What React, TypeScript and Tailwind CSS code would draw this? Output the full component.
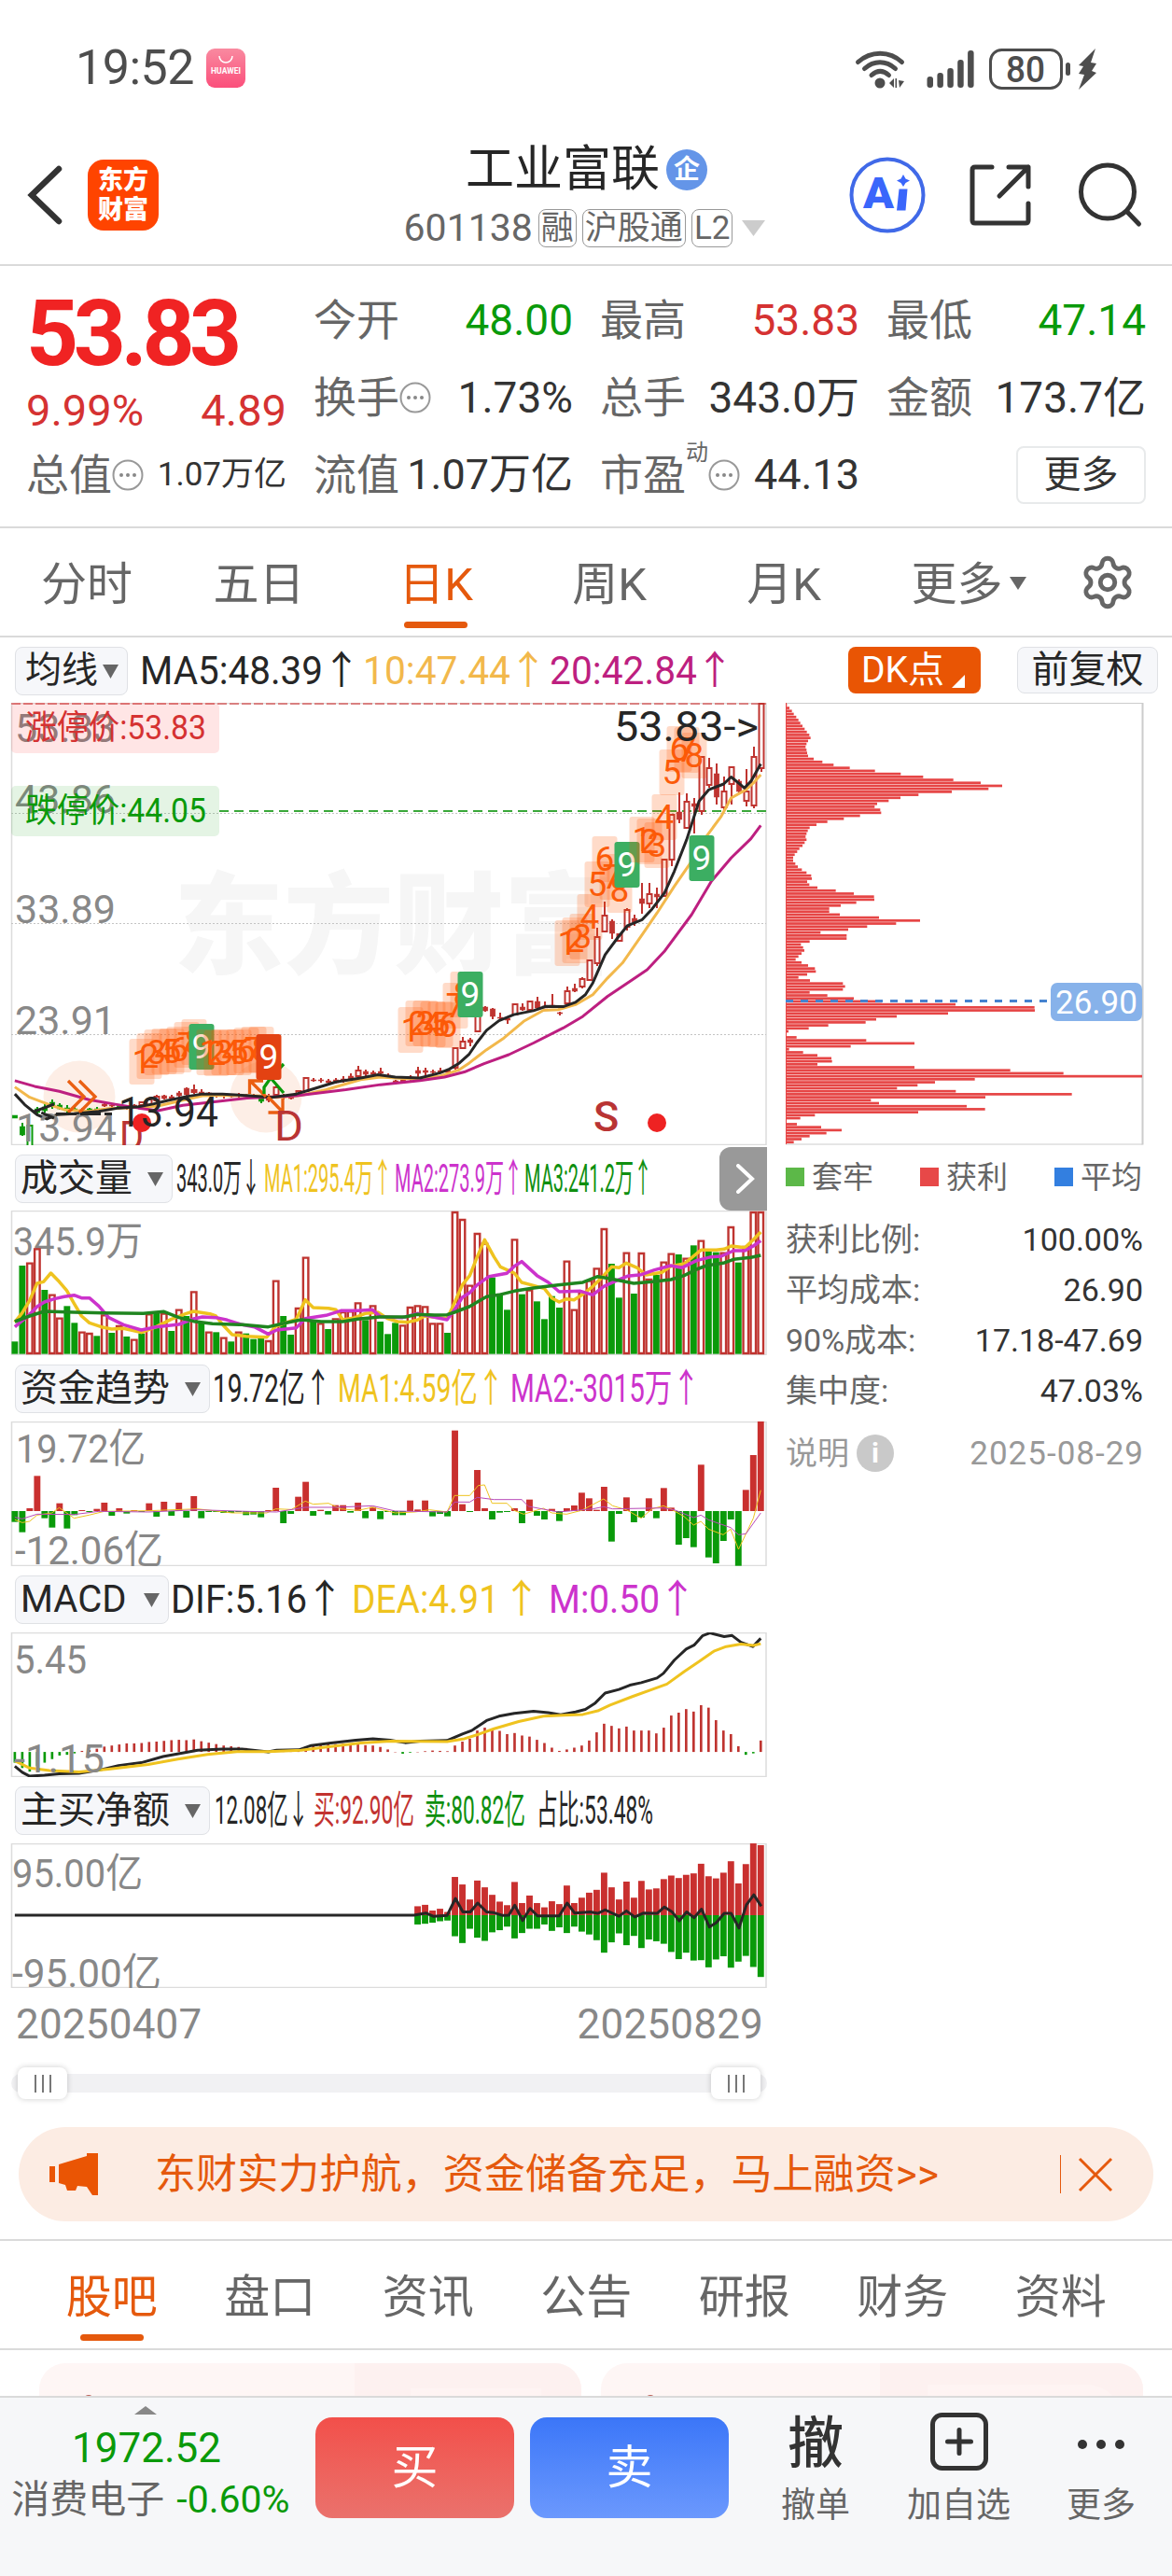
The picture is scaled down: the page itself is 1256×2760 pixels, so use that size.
import React from 'react';
import { Settings } from 'lucide-react';

type Point = [number, number];

const UP = '#bf3430';
const DOWN = '#0a9a0a';
const GOLD = '#efc31f';
const STEP = 8;
const candleX = (i: number) => 16 + STEP * i;

/* ---------- series ---------- */
// indicator series live on a 1568 unit wide grid, one bar every 15.1 units
const GRID_X = 0.5294;
const gridX = (i: number) => 30 + 15.1 * i;

const volumeTops = [
  652, 408, 398, 352, 486, 500, 575, 538, 592, 620, 624, 634, 565, 624, 600, 636, 644, 626, 562, 556,
  560, 618, 548, 570, 490, 592, 620, 622, 638, 652, 620, 626, 644, 640, 648, 455, 570, 630, 543, 380,
  585, 592, 612, 577, 555, 553, 526, 583, 535, 588, 628, 592, 598, 540, 535, 538, 592, 592, 624, 234,
  258, 470, 303, 335, 446, 500, 550, 322, 500, 485, 523, 580, 506, 543, 392, 548, 490, 455, 415, 288,
  402, 511, 365, 498, 366, 450, 438, 395, 368, 372, 383, 343, 326, 355, 365, 365, 282, 398, 345, 234, 234,
];
const volumeDown = new Set([
  0, 1, 4, 7, 8, 11, 13, 15, 17, 19, 21, 23, 25, 27, 29, 31, 32, 33, 36, 37, 40, 42, 47, 49, 50, 51, 58,
  64, 65, 66, 68, 70, 71, 72, 73, 80, 81, 83, 86, 89, 91, 93, 94, 97,
]);
const fundEnds = [
  1232, 1265, 1188, 1084, 1220, 1250, 1172, 1253, 1210, 1194, 1200, 1190, 1170, 1212, 1188, 1205, 1194,
  1200, 1172, 1215, 1167, 1212, 1170, 1218, 1149, 1220, 1200, 1200, 1203, 1203, 1200, 1210, 1208, 1217,
  1194, 1122, 1236, 1206, 1151, 1103, 1212, 1193, 1208, 1178, 1178, 1202, 1170, 1220, 1184, 1223, 1200,
  1210, 1210, 1163, 1192, 1163, 1214, 1206, 1214, 938, 1175, 1200, 1065, 1188, 1224, 1202, 1200, 1188,
  1236, 1160, 1212, 1224, 1190, 1229, 1188, 1179, 1138, 1156, 1193, 1119, 1295, 1206, 1153, 1233, 1218,
  1156, 1220, 1123, 1186, 1305, 1284, 1313, 1048, 1346, 1365, 1293, 1224, 1373, 1129, 1017, 908,
];
const macdEnds = [
  545, 560, 570, 555, 545, 535, 525, 523, 519, 512, 510, 506, 500, 497, 494, 491, 491, 490, 487, 486, 484,
  482, 481, 482, 480, 485, 489, 493, 497, 499, 501, 504, 507, 510, 518, 512, 511, 509, 507, 500, 497, 495,
  494, 493, 492, 492, 493, 496, 497, 501, 508, 515, 520, 517, 515, 513, 511, 512, 513, 497, 486, 478, 455,
  447, 450, 456, 465, 462, 469, 472, 481, 490, 503, 512, 508, 503, 497, 483, 460, 436, 442, 449, 444, 455,
  455, 455, 463, 447, 413, 405, 395, 402, 384, 391, 426, 455, 465, 499, 523, 519, 483,
];
// first bar of this series sits at index 54
const netBars: Point[] = [
  [947, 998], [943, 996], [959, 993], [954, 989], [963, 987], [865, 1031], [886, 1050], [928, 1010],
  [875, 1035], [894, 1044], [915, 1020], [934, 1014], [944, 1004], [879, 1037], [938, 1022], [917, 1010],
  [938, 1010], [950, 998], [933, 1016], [941, 1006], [889, 1022], [938, 1004], [923, 1018], [909, 1026],
  [901, 1042], [853, 1077], [894, 1048], [928, 1023], [878, 1056], [923, 1030], [876, 1064], [900, 1040],
  [897, 1045], [871, 1052], [861, 1075], [868, 1095], [859, 1077], [855, 1099], [828, 1098], [863, 1118],
  [869, 1096], [853, 1087], [821, 1119], [883, 1102], [829, 1086], [771, 1117], [776, 1145],
];
const chips = [
  70, 78, 86, 92, 100, 107, 113, 120, 127, 134, 142, 146, 138, 133, 130, 133, 135, 138, 156, 184, 220, 272,
  353, 436, 508, 605, 693, 762, 718, 600, 493, 435, 397, 360, 352, 370, 373, 305, 253, 200, 165, 143, 137,
  133, 130, 133, 127, 120, 110, 103, 95, 90, 90, 97, 105, 118, 133, 148, 150, 135, 142, 168, 227, 285, 350,
  351, 293, 243, 206, 206, 240, 366, 498, 421, 328, 267, 178, 262, 262, 143, 115, 122, 126, 117, 107, 98,
  117, 138, 160, 163, 135, 107, 144, 250, 257, 250, 143, 200, 285, 375, 612, 866, 867, 588, 423, 357, 323,
  203, 140, 75, 66, 101, 325, 480, 275, 77, 122, 168, 213, 215, 168, 480, 788, 959, 1212, 674, 546, 490,
  424, 613, 986, 708, 340, 366, 648, 707, 492, 160, 113, 66, 102, 180, 246, 197, 143, 117, 92,
];

const lines = {
  ma5: '30,1378 50,1410 75,1440 95,1453 115,1440 150,1437 200,1430 240,1420 280,1416 310,1408 340,1397 380,1385 410,1378 450,1378 490,1382 550,1388 600,1378 640,1360 680,1342 730,1330 765,1320 800,1327 850,1330 890,1315 910,1303 930,1285 950,1258 965,1225 985,1187 1010,1158 1040,1140 1080,1128 1105,1115 1140,1116 1165,1103 1185,1080 1200,1045 1225,960 1250,910 1270,873 1300,855 1320,823 1345,775 1365,710 1390,615 1415,500 1435,465 1465,448 1480,427 1495,445 1507,460 1520,440 1540,388',
  ma10: '30,1357 60,1388 100,1410 130,1425 180,1430 220,1422 280,1418 320,1414 360,1400 410,1383 460,1382 530,1384 560,1388 610,1382 660,1365 730,1335 770,1327 830,1333 890,1325 930,1305 950,1285 985,1245 1020,1210 1060,1160 1100,1127 1130,1125 1165,1110 1200,1080 1230,1030 1260,985 1300,900 1330,835 1365,755 1400,680 1430,605 1460,545 1480,490 1510,465 1525,445 1540,420',
  ma20: '30,1338 70,1355 120,1370 180,1395 230,1408 280,1420 320,1428 370,1412 430,1402 500,1390 600,1383 700,1365 770,1350 850,1338 900,1327 940,1312 980,1287 1030,1260 1080,1225 1140,1180 1180,1145 1230,1085 1280,1035 1310,1005 1345,950 1400,840 1440,740 1480,670 1520,612 1540,572',
  vol1: '30,590 45,560 60,520 75,465 88,460 103,432 120,460 135,488 150,530 165,570 181,592 205,605 226,612 250,610 286,623 316,605 347,580 377,562 392,555 425,563 437,570 452,600 470,630 498,635 540,638 558,603 600,580 618,518 634,543 665,545 680,550 694,582 715,577 739,562 765,558 784,578 805,588 825,590 845,583 860,570 905,578 915,545 936,470 951,440 966,380 981,325 1000,380 1013,412 1041,432 1056,462 1075,470 1102,482 1117,512 1132,525 1147,515 1162,518 1180,500 1200,475 1222,440 1238,412 1253,415 1268,400 1290,415 1308,438 1340,430 1358,410 1385,402 1419,358 1450,358 1466,355 1480,345 1508,350 1525,325 1540,300',
  vol2: '30,605 60,565 75,540 90,525 110,515 130,508 150,503 165,512 181,512 200,538 220,575 250,598 286,615 316,605 362,597 390,580 410,573 437,575 460,583 490,598 515,605 543,628 560,615 600,608 618,578 660,568 690,553 724,553 754,550 770,572 815,575 845,562 875,572 905,582 920,550 936,510 951,495 966,470 990,443 1026,433 1041,410 1056,395 1087,440 1110,462 1132,492 1175,490 1200,502 1222,475 1250,455 1270,442 1298,437 1325,422 1358,408 1380,415 1410,392 1440,380 1460,378 1485,360 1508,360 1525,345 1540,328',
  vol3: '30,588 60,570 90,555 150,558 210,560 290,562 332,556 362,575 392,587 430,595 490,598 543,605 580,592 610,582 650,588 694,588 724,580 770,573 820,573 845,565 880,567 905,566 920,558 950,540 985,508 1010,502 1041,490 1080,480 1130,470 1180,462 1210,443 1235,450 1283,465 1320,460 1358,453 1385,440 1410,420 1430,408 1464,400 1485,388 1520,382 1540,375',
  fund1: '30,1225 45,1234 60,1230 75,1210 105,1203 120,1186 150,1220 180,1210 211,1198 300,1196 400,1190 470,1203 540,1203 558,1190 590,1192 618,1165 634,1175 665,1172 690,1190 724,1195 754,1185 800,1203 840,1200 870,1193 905,1200 920,1147 951,1147 968,1115 981,1113 996,1172 1026,1172 1041,1195 1060,1207 1100,1188 1117,1203 1147,1207 1177,1195 1205,1172 1222,1158 1240,1180 1268,1193 1298,1220 1320,1190 1343,1180 1358,1190 1385,1215 1404,1242 1419,1230 1434,1255 1464,1273 1479,1255 1495,1320 1510,1270 1525,1220 1540,1130',
  fund2: '30,1217 45,1222 75,1207 150,1208 200,1198 300,1200 400,1193 500,1198 560,1200 618,1185 680,1185 754,1180 800,1197 905,1200 920,1168 951,1168 966,1153 1000,1160 1056,1160 1070,1182 1130,1200 1200,1190 1222,1183 1240,1190 1343,1187 1365,1193 1404,1218 1419,1210 1434,1225 1479,1250 1495,1273 1510,1270 1540,1203',
  dif: '30,555 45,572 60,583 90,580 120,576 160,575 200,566 240,553 286,545 330,528 377,516 400,510 450,507 490,507 543,515 560,510 605,509 630,497 670,490 720,482 755,478 790,482 820,489 850,485 905,483 936,465 955,455 985,427 1010,415 1041,407 1080,401 1110,405 1135,411 1165,403 1185,396 1205,378 1225,350 1253,340 1275,328 1298,321 1330,308 1343,295 1365,258 1389,227 1405,216 1422,190 1437,182 1466,192 1482,189 1500,208 1524,220 1540,197',
  dea: '30,540 60,560 100,567 160,571 220,563 300,550 360,535 420,522 480,514 543,514 610,510 650,503 730,490 790,485 905,486 940,478 970,465 1000,450 1050,430 1100,415 1140,412 1180,410 1210,400 1235,384 1280,360 1320,340 1350,325 1385,290 1415,262 1445,233 1470,220 1500,213 1525,217 1540,212',
  net: '30,972 838,972 862,966 877,975 905,973 922,925 937,963 952,963 967,938 985,963 1000,965 1018,973 1030,972 1042,944 1058,987 1073,953 1088,974 1132,974 1148,938 1163,966 1195,963 1210,967 1225,957 1253,975 1268,960 1285,977 1303,966 1330,967 1345,949 1360,962 1375,988 1390,963 1405,979 1420,955 1436,1005 1450,993 1466,967 1480,967 1496,1008 1511,943 1526,915 1541,947',
};

// [index, high, bodyTop, bodyBottom, low, kind]  h = hollow, f = filled, g/G = green filled/hollow
type Candle = [number, number, number, number, number, 'h' | 'f' | 'g' | 'G'];
const candles: Candle[] = [
  [0, 1195, 1195, 1198, 1198, 'g'], [1, 1203, 1207, 1216, 1217, 'g'], [2, 1206, 1206, 1230, 1230, 'G'],
  [3, 1186, 1188, 1192, 1194, 'g'], [4, 1183, 1186, 1190, 1192, 'g'], [5, 1178, 1181, 1185, 1188, 'g'],
  [6, 1182, 1184, 1188, 1189, 'g'], [7, 1184, 1187, 1190, 1195, 'g'], [8, 1186, 1188, 1190, 1191, 'g'],
  [9, 1187, 1189, 1191, 1193, 'f'], [10, 1187, 1188, 1190, 1192, 'g'], [11, 1186, 1188, 1189, 1190, 'g'],
  [12, 1181, 1183, 1185, 1186, 'f'], [13, 1182, 1184, 1185, 1187, 'f'], [14, 1184, 1185, 1187, 1188, 'g'],
  [15, 1184, 1186, 1187, 1189, 'f'], [16, 1183, 1184, 1186, 1187, 'f'],
  [17, 1180, 1181, 1184, 1186, 'h'], [18, 1176, 1178, 1184, 1185, 'h'], [19, 1173, 1175, 1179, 1180, 'h'],
  [20, 1173, 1174, 1177, 1178, 'f'], [21, 1173, 1175, 1177, 1178, 'f'], [22, 1169, 1171, 1174, 1176, 'f'],
  [23, 1165, 1166, 1173, 1174, 'f'], [24, 1162, 1168, 1170, 1172, 'h'], [25, 1167, 1170, 1172, 1174, 'f'],
  [26, 1170, 1171, 1173, 1174, 'f'], [27, 1171, 1172, 1174, 1176, 'f'], [28, 1172, 1173, 1174, 1177, 'f'],
  [29, 1172, 1173, 1175, 1176, 'f'], [30, 1171, 1173, 1174, 1176, 'f'], [31, 1172, 1173, 1175, 1176, 'f'],
  [32, 1172, 1174, 1175, 1177, 'f'], [33, 1173, 1175, 1180, 1182, 'g'], [34, 1172, 1176, 1179, 1181, 'f'],
  [35, 1163, 1165, 1173, 1174, 'h'], [36, 1172, 1174, 1176, 1178, 'f'], [37, 1173, 1175, 1177, 1178, 'f'],
  [38, 1168, 1169, 1172, 1174, 'h'], [39, 1154, 1155, 1169, 1170, 'h'], [40, 1155, 1157, 1158, 1159, 'f'],
  [41, 1155, 1157, 1158, 1160, 'f'], [42, 1156, 1158, 1160, 1161, 'f'], [43, 1155, 1157, 1160, 1161, 'f'],
  [44, 1153, 1156, 1158, 1160, 'f'], [45, 1150, 1153, 1156, 1158, 'f'], [46, 1142, 1147, 1153, 1155, 'h'],
  [47, 1146, 1148, 1151, 1153, 'f'], [48, 1147, 1149, 1151, 1155, 'f'], [49, 1144, 1148, 1150, 1152, 'f'],
  [50, 1150, 1152, 1154, 1155, 'f'], [51, 1157, 1158, 1160, 1162, 'f'], [52, 1155, 1157, 1159, 1160, 'f'],
  [53, 1152, 1154, 1156, 1158, 'f'], [54, 1143, 1147, 1150, 1154, 'f'], [55, 1144, 1147, 1149, 1153, 'f'],
  [56, 1146, 1148, 1149, 1152, 'f'], [57, 1144, 1147, 1149, 1150, 'f'], [58, 1145, 1147, 1149, 1150, 'f'],
  [59, 1123, 1123, 1144, 1146, 'h'], [60, 1111, 1116, 1123, 1124, 'h'], [61, 1112, 1114, 1117, 1121, 'f'],
  [62, 1085, 1085, 1105, 1105, 'h'], [63, 1078, 1079, 1083, 1084, 'f'], [64, 1080, 1081, 1089, 1092, 'f'],
  [65, 1085, 1090, 1091, 1094, 'f'], [66, 1090, 1091, 1093, 1097, 'f'], [67, 1076, 1076, 1087, 1087, 'h'],
  [68, 1075, 1079, 1082, 1083, 'f'], [69, 1072, 1073, 1082, 1083, 'h'], [70, 1068, 1073, 1080, 1082, 'f'],
  [71, 1073, 1078, 1080, 1080, 'f'], [72, 1065, 1077, 1079, 1080, 'f'], [73, 1084, 1085, 1086, 1088, 'f'],
  [74, 1057, 1062, 1075, 1075, 'h'], [75, 1054, 1059, 1062, 1063, 'f'], [76, 1047, 1049, 1057, 1059, 'h'],
  [77, 1029, 1029, 1050, 1051, 'h'], [78, 994, 1004, 1032, 1035, 'h'], [79, 966, 981, 998, 999, 'h'],
  [80, 985, 987, 1000, 1006, 'f'], [81, 1000, 1001, 1008, 1009, 'h'], [82, 973, 975, 993, 997, 'h'],
  [83, 980, 984, 988, 992, 'f'], [84, 946, 963, 968, 979, 'f'], [85, 946, 958, 968, 973, 'h'],
  [86, 951, 958, 961, 973, 'f'], [87, 920, 921, 960, 960, 'h'], [88, 872, 873, 921, 928, 'h'],
  [89, 849, 870, 878, 882, 'f'], [90, 850, 859, 887, 888, 'h'], [91, 855, 861, 864, 893, 'f'],
  [92, 811, 811, 869, 873, 'h'], [93, 812, 823, 841, 844, 'h'], [94, 818, 829, 854, 862, 'f'],
  [95, 832, 848, 865, 868, 'h'], [96, 822, 822, 840, 862, 'h'], [97, 835, 837, 848, 850, 'f'],
  [98, 824, 848, 858, 864, 'h'], [99, 800, 811, 863, 866, 'h'], [100, 754, 754, 823, 827, 'h'],
];

// nine-turn counts: start index, tops of 1..8, then the closing 9
const counts = [
  { start: 17, tops: [1113, 1107, 1103, 1102, 1102, 1100, 1095, 1092], nine: 1097, fill: '#3cae62' },
  { start: 26, tops: [1103, 1104, 1103, 1103, 1103, 1101, 1100, 1100], nine: 1108, fill: '#e34212' },
  { start: 53, tops: [1079, 1072, 1072, 1073, 1073, 1074, 1053, 1041], nine: 1041, fill: '#3cae62' },
  { start: 74, tops: [986, 983, 979, 958, 923, 896, 915, 929], nine: 902, fill: '#3cae62' },
  { start: 84, tops: [875, 877, 881, 851, 803, 778, 779, 785], nine: 895, fill: '#3cae62' },
];

/* ---------- small pieces ---------- */
interface LabelProps {
  x: number;
  y: number;
  w: number;
  size?: number;
  fill?: string;
  children: string;
}

const Label: React.FC<LabelProps> = ({ x, y, w, size = 42, fill = '#888888', children }) => (
  <text x={x} y={y} textLength={w} lengthAdjust="spacingAndGlyphs" fontSize={size} fill={fill}>
    {children}
  </text>
);

const Series = ({ points, color, width = 3 }: { points: string; color: string; width?: number }) => (
  <polyline
    points={points}
    fill="none"
    stroke={color}
    strokeWidth={width}
    strokeLinejoin="round"
    vectorEffect="non-scaling-stroke"
  />
);

interface PanelProps {
  top: number;
  height: number;
  children: React.ReactNode;
}

const Panel: React.FC<PanelProps> = ({ top, height, children }) => (
  <svg className="block" width={822} height={height} viewBox={`0 ${top} 822 ${height}`}>
    <rect x={12.5} y={top + 0.5} width={808.5} height={height - 1} fill="none" stroke="#dcdcdc" strokeWidth={1.5} />
    {children}
  </svg>
);

interface LegendItem {
  text: string;
  x: number;
  w: number;
  color: string;
}

interface LegendProps {
  name: string;
  width: number;
  items: LegendItem[];
  tight?: boolean;
  children?: React.ReactNode;
}

const Legend: React.FC<LegendProps> = ({ name, width, items, tight, children }) => (
  <div className="flex h-[71px] items-center pl-4">
    <button
      className={`flex h-[52px] shrink-0 items-center justify-between rounded-lg border border-[#dfe1e5] bg-[#f6f7fa] pr-[9px] leading-none whitespace-nowrap text-[#262626] ${tight ? 'pl-[10px] text-[39px]' : 'pl-[5px] text-[40px]'}`}
      style={{ width }}
    >
      {name}
      <svg width={17} height={16} viewBox="0 0 17 16">
        <path d="M0 1h17L8.500 16z" fill="#666" />
      </svg>
    </button>
    <svg
      className="block shrink-0"
      width={(children ? 771 : 822) - 16 - width}
      height={60}
      viewBox={`${16 + width} 0 ${(children ? 771 : 822) - 16 - width} 60`}
    >
      {items.map((item) => (
        <Label key={item.text + item.x} x={item.x} y={44} w={item.w} fill={item.color}>
          {item.text}
        </Label>
      ))}
    </svg>
    {children}
  </div>
);

const InfoDots = () => (
  <svg className="shrink-0" width={34} height={34} viewBox="0 0 34 34">
    <circle cx={17} cy={17} r={15.5} fill="none" stroke="#999" strokeWidth={2} />
    <circle cx={10} cy={17} r={2} fill="#888" />
    <circle cx={17} cy={17} r={2} fill="#888" />
    <circle cx={24} cy={17} r={2} fill="#888" />
  </svg>
);

/* ---------- header ---------- */
const StatusBar = () => (
  <div className="flex h-[142px] items-start justify-between pt-[48px] pr-[79px] pl-[81px] text-[#4d4d4d]">
    <div className="flex items-center gap-[13px]">
      <span className="text-[52px] leading-[50px] tracking-[-0.5px]">19:52</span>
      <svg width={42} height={42} viewBox="0 0 42 42">
        <defs>
          <linearGradient id="bag" x1="0" y1="0" x2="0" y2="1">
            <stop offset="0" stopColor="#f98aa0" />
            <stop offset="1" stopColor="#fb4f7b" />
          </linearGradient>
        </defs>
        <rect width={42} height={42} rx={9} fill="url(#bag)" />
        <path d="M14 8a7 7 0 0 0 14 0" fill="none" stroke="#fff" strokeWidth={1.5} />
        <text x={5} y={27} fontSize={8.5} fontWeight={700} textLength={32} fill="#fff">
          HUAWEI
        </text>
      </svg>
    </div>
    <svg width={262} height={50} viewBox="915 46 262 50">
      <g fill="none" stroke="#4d4d4d" strokeWidth={5} strokeLinecap="round">
        <path d="M919.500 64.500c13.500-12.500 34-12.500 47 0" />
        <path d="M926.500 71.500c10-9 23-9 33 0" />
        <path d="M934 78.500c6-5.500 12.500-5.500 18.500 0" />
      </g>
      <circle cx={943} cy={87} r={5.5} fill="#4d4d4d" />
      <path d="M953 87l5-5v10zM959.500 82h1.500v10h-1.500zM963 84l6 1-5 7z" fill="#4d4d4d" />
      {[12, 16, 21, 30, 40].map((h, i) => (
        <rect key={h} x={993.5 + i * 10.9} y={92 - h} width={6.5} height={h} rx={3} fill="#4d4d4d" />
      ))}
      <rect x={1061.5} y={51.5} width={76} height={41} rx={12} fill="none" stroke="#4d4d4d" strokeWidth={3} />
      <text x={1078} y={85.5} fontSize={38} fontWeight={500} textLength={42} lengthAdjust="spacingAndGlyphs" fill="#4d4d4d">
        80
      </text>
      <rect x={1142} y={65} width={5} height={14} rx={2.5} fill="#4d4d4d" />
      <path d="M1174 50l-18 18 5 1-5 8 6 1-6 16 19-18-5-2 5-8-6-1z" fill="#4d4d4d" />
    </svg>
  </div>
);

const Tag = ({ children }: { children: React.ReactNode }) => (
  <span className="flex h-[41px] items-center rounded-lg border-[1.5px] border-[#999] px-[2px] text-[35px] leading-none">
    {children}
  </span>
);

const Header = () => (
  <header className="flex h-[143px] items-center justify-between border-b-2 border-[#dadada] pr-[30px] pl-[29px]">
    <div className="flex w-[314px] items-center gap-[27px] pb-2">
      <svg width={38} height={64} viewBox="0 0 38 64">
        <path d="M34 4L5 32l29 28" fill="none" stroke="#333" strokeWidth={6.5} strokeLinecap="round" />
      </svg>
      <div className="flex size-[76px] flex-col items-center justify-center rounded-[17px] bg-[#ff4400] text-[27px] leading-[32px] font-black text-white">
        <span>东方</span>
        <span>财富</span>
      </div>
    </div>
    <div className="flex flex-col items-center pt-1">
      <div className="flex h-[60px] items-center gap-[7px] pl-1">
        <span className="text-[52px] leading-none text-[#262626]">工业富联</span>
        <span className="flex size-[44px] items-center justify-center rounded-full bg-[#6495e8] text-[28px] leading-none font-bold text-white">
          企
        </span>
      </div>
      <div className="flex h-[66px] items-center gap-[6px] text-[#666]">
        <span className="text-[41px] leading-none">601138</span>
        <Tag>融</Tag>
        <Tag>沪股通</Tag>
        <Tag>L2</Tag>
        <svg className="ml-1" width={25} height={17} viewBox="0 0 25 17">
          <path d="M0 0h25L12.500 17z" fill="#ccc" />
        </svg>
      </div>
    </div>
    <svg className="mb-[7px]" width={316} height={84} viewBox="910 167 316 84">
      <circle cx={951} cy={209} r={38.5} fill="none" stroke="#4069e8" strokeWidth={4} />
      <text x={925} y={223} fontSize={47} fontWeight={900} fill="#3a66fb" textLength={33} lengthAdjust="spacingAndGlyphs">
        A
      </text>
      <path d="M963.500 202.500h9l-2 23h-9.500zM968 187l2.500 4.500 4.500 2-4.500 2.500-2.500 4-2.500-4-4.500-2.500 4.500-2z" fill="#3a66fb" />
      <g fill="none" stroke="#333" strokeWidth={5} strokeLinecap="round" strokeLinejoin="round">
        <path d="M1063 179h-18q-3 0-3 3v54q0 3 3 3h54q3 0 3-3v-18M1081 179h21v21M1102 179l-31 31" />
        <circle cx={1187} cy={205.5} r={28.5} />
        <path d="M1208 227l12.500 13" />
      </g>
    </svg>
  </header>
);

/* ---------- quote ---------- */
interface StatProps {
  label: string;
  value: string;
  color?: string;
  size?: string;
  dots?: boolean;
  sup?: string;
}

const Stat: React.FC<StatProps> = ({ label, value, color = 'text-[#333]', size = 'text-[46px]', dots, sup }) => (
  <div className="flex h-[83px] items-center justify-between leading-none whitespace-nowrap">
    <span className="flex items-center text-[46px] text-[#666]">
      {label}
      {sup && <span className="mb-12 text-[24px]">{sup}</span>}
      {dots && <InfoDots />}
    </span>
    <span className={`${size} ${color}`}>{value}</span>
  </div>
);

const Quote = () => (
  <section className="flex h-[281px] border-b-2 border-[#dadada] pt-[16px] pr-[28px] pl-[28px]">
    <div className="w-[279px]">
      <div className="h-[112px] pt-[5px] text-[98px] leading-[104px] font-bold tracking-[-5.5px] text-[#f02323]">53.83</div>
      <div className="flex h-[54px] items-center justify-between text-[47px] text-[#d53232]">
        <span>9.99%</span>
        <span>4.89</span>
      </div>
      <Stat label="总值" value="1.07万亿" size="text-[35px]" dots />
    </div>
    <div className="ml-[29px] w-[278px]">
      <Stat label="今开" value="48.00" color="text-[#0a9a0a]" />
      <Stat label="换手" value="1.73%" dots />
      <Stat label="流值" value="1.07万亿" size="text-[45px]" />
    </div>
    <div className="ml-[29px] w-[278px]">
      <Stat label="最高" value="53.83" color="text-[#d53232]" />
      <Stat label="总手" value="343.0万" />
      <Stat label="市盈" value="44.13" size="text-[45px]" sup="动" dots />
    </div>
    <div className="ml-[29px] w-[278px]">
      <Stat label="最低" value="47.14" color="text-[#0a9a0a]" />
      <Stat label="金额" value="173.7亿" />
      <div className="flex h-[83px] items-center justify-end">
        <button className="h-[62px] w-[139px] rounded-lg border-2 border-[#e8eaeb] text-[40px] leading-none text-[#333]">更多</button>
      </div>
    </div>
  </section>
);

const periods = [
  { name: '分时', width: 'w-[186px]' },
  { name: '五日', width: 'w-[183px]' },
  { name: '日K', width: 'w-[196px]', active: true },
  { name: '周K', width: 'w-[176px]' },
  { name: '月K', width: 'w-[198px]' },
];

const Periods = () => (
  <nav className="flex h-[117px] items-stretch border-b-2 border-[#dadada] text-[49px] leading-none text-[#666]">
    {periods.map((p) => (
      <div
        key={p.name}
        className={`flex flex-col items-center pt-[36px] ${p.width} ${p.active ? 'text-[#e5590d]' : ''}`}
      >
        {p.name}
        {p.active && <span className="mt-[15px] h-[7px] w-[68px] rounded-full bg-[#e5590d]" />}
      </div>
    ))}
    <div className="flex w-[198px] justify-center gap-[7px] pt-[36px]">
      更多
      <svg className="mt-[16px]" width={18} height={14} viewBox="0 0 18 14">
        <path d="M0 0h18L9 14z" fill="#666" />
      </svg>
    </div>
    <Settings className="mt-[27px] ml-[19px]" size={62} strokeWidth={1.9} />
  </nav>
);

/* ---------- charts ---------- */
const MainChart = () => (
  <Panel top={753} height={474}>
    <text x={186} y={1034} fontSize={118} fontWeight={900} fill="#f6f6f6">
      东方财富
    </text>
    <g stroke="#c4c4c4" strokeWidth={1.2} strokeDasharray="2 2">
      <path d="M12 871.500H821M12 989.500H821M12 1108.500H821" />
    </g>
    <path d="M12 754H821" stroke="#d98080" strokeWidth={2} strokeDasharray="10 3" />
    <path d="M235 869H821" stroke="#3aa83a" strokeWidth={2} strokeDasharray="10 6" />
    <circle cx={85} cy={1175} r={38.5} fill="#fdeee6" />
    <circle cx={285} cy={1175} r={38.5} fill="#fdeee6" />

    <Label x={16} y={795} w={108} size={43}>53.83</Label>
    <Label x={16} y={871} w={108} size={43}>43.86</Label>
    <Label x={16} y={989} w={108} size={43}>33.89</Label>
    <Label x={16} y={1108} w={108} size={43}>23.91</Label>

    <rect x={12} y={753} width={223} height={54} rx={5} fill="#f00" fillOpacity={0.1} />
    <Label x={27} y={792} w={194} size={36} fill="#d53232">涨停价:53.83</Label>
    <rect x={12} y={842} width={223} height={54} rx={5} fill="#0a9a0a" fillOpacity={0.11} />
    <Label x={27} y={881} w={194} size={36} fill="#0a9a0a">跌停价:44.05</Label>

    {candles.map(([i, high, top, bottom, low, kind]) => {
      const x = candleX(i);
      const color = kind === 'g' || kind === 'G' ? DOWN : UP;
      const hollow = kind === 'h' || kind === 'G';
      return (
        <g key={i} stroke={color}>
          <path d={`M${x} ${high}V${low}`} strokeWidth={2} />
          <rect
            x={hollow ? x - 2.5 : x - 2.8}
            y={top}
            width={hollow ? 5 : 5.6}
            height={Math.max(bottom - top, 1)}
            fill={hollow ? '#fff' : color}
            strokeWidth={hollow ? 2 : 0.5}
          />
        </g>
      );
    })}

    <g transform="translate(0 680) scale(0.5294 0.35714)">
      <Series points={lines.ma10} color="#f2b84b" />
      <Series points={lines.ma20} color="#bd1f80" />
      <Series points={lines.ma5} color="#262626" />
    </g>

    <g fill="none" strokeWidth={3.3}>
      <path d="M73 1158l17 17-17 17M85 1158l17 17-17 17M267.500 1172v-14H282M268 1158l17 17M287 1175l16 16.500M287.500 1192H303v-15" stroke="#ea5f12" />
      <path d="M283 1172v-7l7-10 14-15M290 1155l14 16" stroke={DOWN} />
    </g>

    {counts.map(({ start, tops, nine, fill }) => (
      <g key={start} fontSize={37} textAnchor="middle">
        {tops.map((top, k) => (
          <g key={k}>
            <rect x={candleX(start + k) - 13.5} y={top} width={27} height={49} rx={3} fill="#ff5500" fillOpacity={0.21} />
            <text x={candleX(start + k)} y={top + 37} fill="#fb5b0a">{k + 1}</text>
          </g>
        ))}
        <rect x={candleX(start + 8) - 13.5} y={nine} width={27} height={49} rx={3} fill={fill} />
        <text x={candleX(start + 8)} y={nine + 37} fill="#fff">9</text>
      </g>
    ))}

    <Label x={17} y={1223} w={108} size={43}>13.94</Label>
    <Label x={128} y={1233} w={26} size={45} fill="#b93434">D</Label>
    <Label x={294} y={1222} w={31} size={45} fill="#b93434">D</Label>
    <circle cx={152} cy={1203} r={10} fill="#ee2222" />
    <path d="M58 1183l-19 7 19 8M60 1193.500H120" fill="none" stroke="#262626" strokeWidth={3} strokeDasharray="22 4" />
    <Label x={127} y={1207} w={107} size={44} fill="#262626">13.94</Label>
    <text x={636} y={1212} fontSize={45} fontWeight={500} fill="#b93434">S</text>
    <circle cx={704} cy={1203} r={10} fill="#ee2222" />
    <Label x={658} y={794} w={155} size={44} fill="#262626">{'53.83->'}</Label>
  </Panel>
);

const VolumeChart = () => (
  <Panel top={1297} height={155}>
    <Label x={14} y={1345} w={139} size={43}>345.9万</Label>
    <g transform={`translate(0 1220) scale(${GRID_X} 0.33333)`}>
      {volumeTops.map((top, i) =>
        volumeDown.has(i) ? (
          <rect key={i} x={gridX(i) - 6.5} y={top} width={13} height={692 - top} fill={DOWN} />
        ) : (
          <rect
            key={i}
            x={gridX(i) - 5.2}
            y={top + 3}
            width={10.4}
            height={687 - top}
            fill="#fff"
            stroke={UP}
            strokeWidth={2.4}
            vectorEffect="non-scaling-stroke"
          />
        ),
      )}
      <Series points={lines.vol1} color={GOLD} width={3.5} />
      <Series points={lines.vol2} color="#cc33cc" width={3.5} />
      <Series points={lines.vol3} color="#1f851f" width={3.5} />
    </g>
  </Panel>
);

const FundChart = () => (
  <Panel top={1523} height={155}>
    <Label x={17} y={1567} w={139} size={43}>19.72亿</Label>
    <Label x={16} y={1676} w={159} size={43}>-12.06亿</Label>
    <g transform={`translate(0 1220) scale(${GRID_X} 0.33333)`}>
      {fundEnds.map((end, i) => (
        <rect
          key={i}
          x={gridX(i) - 6.5}
          y={Math.min(end, 1197)}
          width={13}
          height={Math.max(Math.abs(end - 1197), 2)}
          fill={end > 1197 ? DOWN : '#c9302f'}
        />
      ))}
      <Series points={lines.fund1} color={GOLD} width={1} />
      <Series points={lines.fund2} color="#b84ab8" width={1} />
    </g>
  </Panel>
);

const MacdChart = () => (
  <Panel top={1749} height={155}>
    <g transform={`translate(0 1680) scale(${GRID_X} 0.3827)`}>
      {macdEnds.map((end, i) => (
        <rect
          key={i}
          x={gridX(i) - 2.5}
          y={Math.min(end, 515)}
          width={5}
          height={Math.max(Math.abs(end - 515), 1)}
          fill={end > 515 ? DOWN : UP}
        />
      ))}
      <Series points={lines.dif} color="#262626" />
      <Series points={lines.dea} color={GOLD} />
    </g>
    <Label x={15} y={1793} w={78} size={43}>5.45</Label>
    <Label x={15} y={1899} w={97} size={43}>-1.15</Label>
  </Panel>
);

const NetBuyChart = () => (
  <Panel top={1975} height={155}>
    <Label x={13} y={2022} w={140} size={43}>95.00亿</Label>
    <Label x={13} y={2129} w={160} size={43}>-95.00亿</Label>
    <g transform={`translate(0 1680) scale(${GRID_X} 0.3827)`}>
      {netBars.map(([top, bottom], k) => (
        <React.Fragment key={k}>
          <rect x={gridX(k + 54) - 6.5} y={top} width={13} height={972 - top} fill="#c9302f" />
          <rect x={gridX(k + 54) - 6.5} y={972} width={13} height={bottom - 972} fill={DOWN} />
        </React.Fragment>
      ))}
      <Series points={lines.net} color="#262626" width={3} />
    </g>
  </Panel>
);

const Handle = () => (
  <div className="flex h-[34px] w-[53px] items-center justify-center gap-[6px] rounded-lg bg-white shadow-[0_0_6px_rgba(0,0,0,0.2)]">
    <span className="h-[19px] w-[2px] bg-[#777]" />
    <span className="h-[19px] w-[2px] bg-[#777]" />
    <span className="h-[19px] w-[2px] bg-[#777]" />
  </div>
);

const ChartColumn = () => (
  <div className="w-[822px] shrink-0">
    <div className="-mb-px">
      <Legend
        name="均线"
        width={121}
        tight
        items={[
          { text: 'MA5:48.39', x: 150, w: 196, color: '#262626' },
          { text: '↑', x: 345, w: 42, color: '#262626' },
          { text: '10:47.44', x: 389, w: 158, color: '#f2b84b' },
          { text: '↑', x: 545, w: 42, color: '#f2b84b' },
          { text: '20:42.84', x: 589, w: 158, color: '#bd1f80' },
          { text: '↑', x: 745, w: 42, color: '#bd1f80' },
        ]}
      />
    </div>
    <MainChart />
    <div className="-mb-px">
      <Legend
        name="成交量"
        width={169}
        items={[
          { text: '343.0万↓', x: 189, w: 90, color: '#262626' },
          { text: 'MA1:295.4万↑', x: 283, w: 137, color: GOLD },
          { text: 'MA2:273.9万↑', x: 423, w: 137, color: '#cc33cc' },
          { text: 'MA3:241.2万↑', x: 562, w: 137, color: '#0f8f0f' },
        ]}
      >
        <button className="flex h-[68px] w-[51px] shrink-0 items-center justify-center rounded-l-xl bg-[#999] pl-1">
          <svg width={20} height={32} viewBox="0 0 20 32">
            <path d="M2 2l15 14L2 30" fill="none" stroke="#fff" strokeWidth={4} strokeLinecap="round" />
          </svg>
        </button>
      </Legend>
    </div>
    <VolumeChart />
    <Legend
      name="资金趋势"
      width={209}
      items={[
        { text: '19.72亿↑', x: 228, w: 127, color: '#262626' },
        { text: 'MA1:4.59亿↑', x: 362, w: 178, color: GOLD },
        { text: 'MA2:-3015万↑', x: 547, w: 203, color: '#cc33cc' },
      ]}
    />
    <FundChart />
    <Legend
      name="MACD"
      width={165}
      items={[
        { text: 'DIF:5.16', x: 183, w: 146, color: '#262626' },
        { text: '↑', x: 327, w: 42, color: '#262626' },
        { text: 'DEA:4.91', x: 377, w: 158, color: GOLD },
        { text: '↑', x: 538, w: 42, color: GOLD },
        { text: 'M:0.50', x: 588, w: 119, color: '#cc33cc' },
        { text: '↑', x: 705, w: 42, color: '#cc33cc' },
      ]}
    />
    <MacdChart />
    <Legend
      name="主买净额"
      width={209}
      items={[
        { text: '12.08亿↓', x: 230, w: 101, color: '#262626' },
        { text: '买:92.90亿', x: 336, w: 108, color: '#c23330' },
        { text: '卖:80.82亿', x: 455, w: 108, color: '#0f8f0f' },
        { text: '占比:53.48%', x: 575, w: 125, color: '#262626' },
      ]}
    />
    <NetBuyChart />
    <div className="flex h-[78px] items-center justify-between pr-[4px] pl-[17px] text-[44px] tracking-[0.2px] text-[#888]">
      <span>20250407</span>
      <span>20250829</span>
    </div>
    <div className="mt-[14px] ml-3 flex h-5 items-center justify-between rounded-full bg-[#f1f1f3] px-[7px]">
      <Handle />
      <Handle />
    </div>
  </div>
);

/* ---------- cost distribution ---------- */
const chipLegend = [
  { name: '套牢', color: 'bg-[#5cb848]' },
  { name: '获利', color: 'bg-[#e74848]' },
  { name: '平均', color: 'bg-[#337fe0]' },
];

const chipRows = [
  ['获利比例:', '100.00%'],
  ['平均成本:', '26.90'],
  ['90%成本:', '17.18-47.69'],
  ['集中度:', '47.03%'],
];

const ChipColumn = () => (
  <div className="flex-1 pl-5">
    <div className="flex h-[70px] items-center gap-[39px] pl-[67px]">
      <button className="flex h-[50px] w-[142px] items-center gap-2 rounded-lg bg-[#e95504] pl-[14px] text-[39px] leading-none whitespace-nowrap text-white">
        DK点
        <svg className="mt-6 shrink-0" width={14} height={14} viewBox="0 0 14 14">
          <path d="M14 0v14H0z" fill="#fff" />
        </svg>
      </button>
      <button className="h-[50px] w-[151px] rounded-lg border border-[#dfe1e5] bg-[#f6f7fa] text-[40px] leading-none text-[#262626]">
        前复权
      </button>
    </div>
    <svg className="block" width={384} height={474} viewBox="842 753 384 474">
      <path d="M842 753.500H1224.500M842 1226H1224.500" stroke="#ccc" strokeWidth={1} />
      <path d="M1224.500 753V1226.500" stroke="#ccc" strokeWidth={2} />
      {chips.map((end, i) => (
        <rect key={i} x={842} y={754 + i * 3.208} width={(end - 66) / 3} height={2.7} fill="#e64545" />
      ))}
      <path d="M842.500 753V1226" stroke="#e64545" strokeWidth={1} />
      <path d="M842 1072.500H1122" stroke="#4583cf" strokeWidth={3} strokeDasharray="8 8" />
      <rect x={1126} y={1053} width={98} height={41} rx={7} fill="#87b2ea" />
      <text x={1175} y={1086} fontSize={35} textAnchor="middle" fill="#fff">26.90</text>
    </svg>
    <div className="flex h-[68px] w-[382px] items-center justify-between text-[33px] leading-none text-[#666]">
      {chipLegend.map((item) => (
        <span key={item.name} className="flex items-center gap-2">
          <i className={`size-5 ${item.color}`} />
          {item.name}
        </span>
      ))}
    </div>
    <div className="pt-[6px]">
      {chipRows.map(([label, value]) => (
        <div key={label} className="flex h-[54px] w-[383px] items-center justify-between text-[34px] leading-none">
          <span className="text-[#666]">{label}</span>
          <span className="text-[#333]">{value}</span>
        </div>
      ))}
    </div>
    <div className="mt-[13px] flex h-[54px] w-[383px] items-center justify-between text-[34px] leading-none text-[#999]">
      <span className="flex items-center gap-2">
        说明
        <i className="flex size-10 items-center justify-center rounded-full bg-[#c9c9c9] text-[30px] font-bold text-white not-italic">i</i>
      </span>
      <span className="-mr-px text-[35px] tracking-[1px]">2025-08-29</span>
    </div>
  </div>
);

/* ---------- lower part ---------- */
const Notice = () => (
  <div className="mx-5 mt-[37px] flex h-[101px] items-center rounded-full bg-[#fcece3] text-[#e5590d]">
    <svg className="ml-[33px]" width={53} height={46} viewBox="0 0 53 46">
      <path d="M0 14h6v17H0zM10 12L40 3V0h12v45H46l-6-9-10-1-2 5H19l-2-6-7-2z" fill="#ea5504" />
    </svg>
    <span className="ml-[60px] text-[44px] leading-none tracking-[0.1px] whitespace-nowrap">东财实力护航，资金储备充足，马上融资&gt;&gt;</span>
    <span className="ml-auto h-[41px] w-[1.5px] bg-[#e5590d]" />
    <svg className="mr-[43px] ml-[18px]" width={38} height={38} viewBox="0 0 38 38">
      <path d="M2 2l34 34M36 2L2 36" stroke="#e5590d" strokeWidth={3} />
    </svg>
  </div>
);

const sections = ['股吧', '盘口', '资讯', '公告', '研报', '财务', '资料'];

const Sections = () => (
  <nav className="mt-[19px] flex h-[119px] border-y-2 border-[#dadada] pl-[35px] text-[49px] leading-none text-[#666]">
    {sections.map((name, i) => (
      <div key={name} className={`flex w-[169.5px] flex-col items-center pt-[36px] ${i === 0 ? 'text-[#e5590d]' : ''}`}>
        {name}
        {i === 0 && <span className="mt-[15px] h-[7px] w-[68px] rounded-full bg-[#e5590d]" />}
      </div>
    ))}
  </nav>
);

const Cards = () => (
  <div className="flex h-[49px] gap-[21px] overflow-hidden pt-[14px] pl-[42px]">
    {[0, 1].map((n) => (
      <div key={n} className="flex h-20 w-[581px] overflow-hidden rounded-[28px] bg-[#fef6f5]">
        <span className="mt-[34px] ml-[47px] h-4 w-3 rounded-full bg-[#b96058]" />
        <div className={n === 0 ? 'ml-auto w-[243px] bg-[#fdf1f0] pt-[27px] pl-[60px]' : 'ml-auto w-[282px] bg-[#fdf1f0] pt-[23px] pl-[51px]'}>
          <div className={n === 0 ? 'h-10 w-[140px] bg-[#fef4f3]' : 'h-10 w-[210px] rounded-tr-[40px] bg-[#fef4f3]'} />
        </div>
      </div>
    ))}
  </div>
);

const BottomBar = () => (
  <footer className="flex h-[193px] border-t-2 border-[#dadada] bg-[#f6f7f9] leading-none whitespace-nowrap">
    <div className="flex w-[323px] flex-col items-center pt-[9px]">
      <svg className="mr-[11px]" width={24} height={9} viewBox="0 0 24 9">
        <path d="M0 9h24L12 0z" fill="#888" />
      </svg>
      <span className="mt-[14px] mr-[9px] text-[44px] text-[#0a9a0a]">1972.52</span>
      <span className="mt-[13px] flex items-center gap-[13px] text-[41px] text-[#666]">
        消费电子<span className="text-[#0a9a0a]">-0.60%</span>
      </span>
    </div>
    <button className="mt-[21px] ml-[15px] h-[108px] w-[213px] rounded-[18px] bg-linear-to-b from-[#f24f4a] to-[#ea716c] text-[50px] text-white">
      买
    </button>
    <button className="mt-[21px] ml-[17px] h-[108px] w-[213px] rounded-[18px] bg-linear-to-b from-[#3b76f8] to-[#6b98fd] text-[50px] text-white">
      卖
    </button>
    <div className="ml-4 flex w-[154px] flex-col items-center pt-[20px] text-[37px] text-[#666]">
      <span className="h-[62px] text-[60px] font-medium text-[#333]">撤</span>
      <span className="mt-[15px]">撤单</span>
    </div>
    <div className="flex w-[153px] flex-col items-center pt-[16px] text-[37px] text-[#666]">
      <svg width={62} height={62} viewBox="0 0 62 62" fill="none" stroke="#333" strokeWidth={5} strokeLinecap="round">
        <rect x={2.5} y={2.5} width={57} height={57} rx={10} />
        <path d="M18.500 31h25M31 18.500v25" />
      </svg>
      <span className="mt-[19px]">加自选</span>
    </div>
    <div className="flex w-[152px] flex-col items-center pt-[16px] text-[37px] text-[#666]">
      <svg width={62} height={62} viewBox="0 0 62 62" fill="#333">
        <circle cx={11} cy={34} r={5} />
        <circle cx={31} cy={34} r={5} />
        <circle cx={51} cy={34} r={5} />
      </svg>
      <span className="mt-[19px]">更多</span>
    </div>
  </footer>
);

export default function App() {
  return (
    <div className="flex h-[2760px] w-[1256px] flex-col overflow-hidden bg-white font-['Roboto','Noto_Sans_CJK_SC',sans-serif]">
      <StatusBar />
      <Header />
      <Quote />
      <Periods />
      <main className="flex h-[1559px]">
        <ChartColumn />
        <ChipColumn />
      </main>
      <Notice />
      <Sections />
      <Cards />
      <BottomBar />
    </div>
  );
}
